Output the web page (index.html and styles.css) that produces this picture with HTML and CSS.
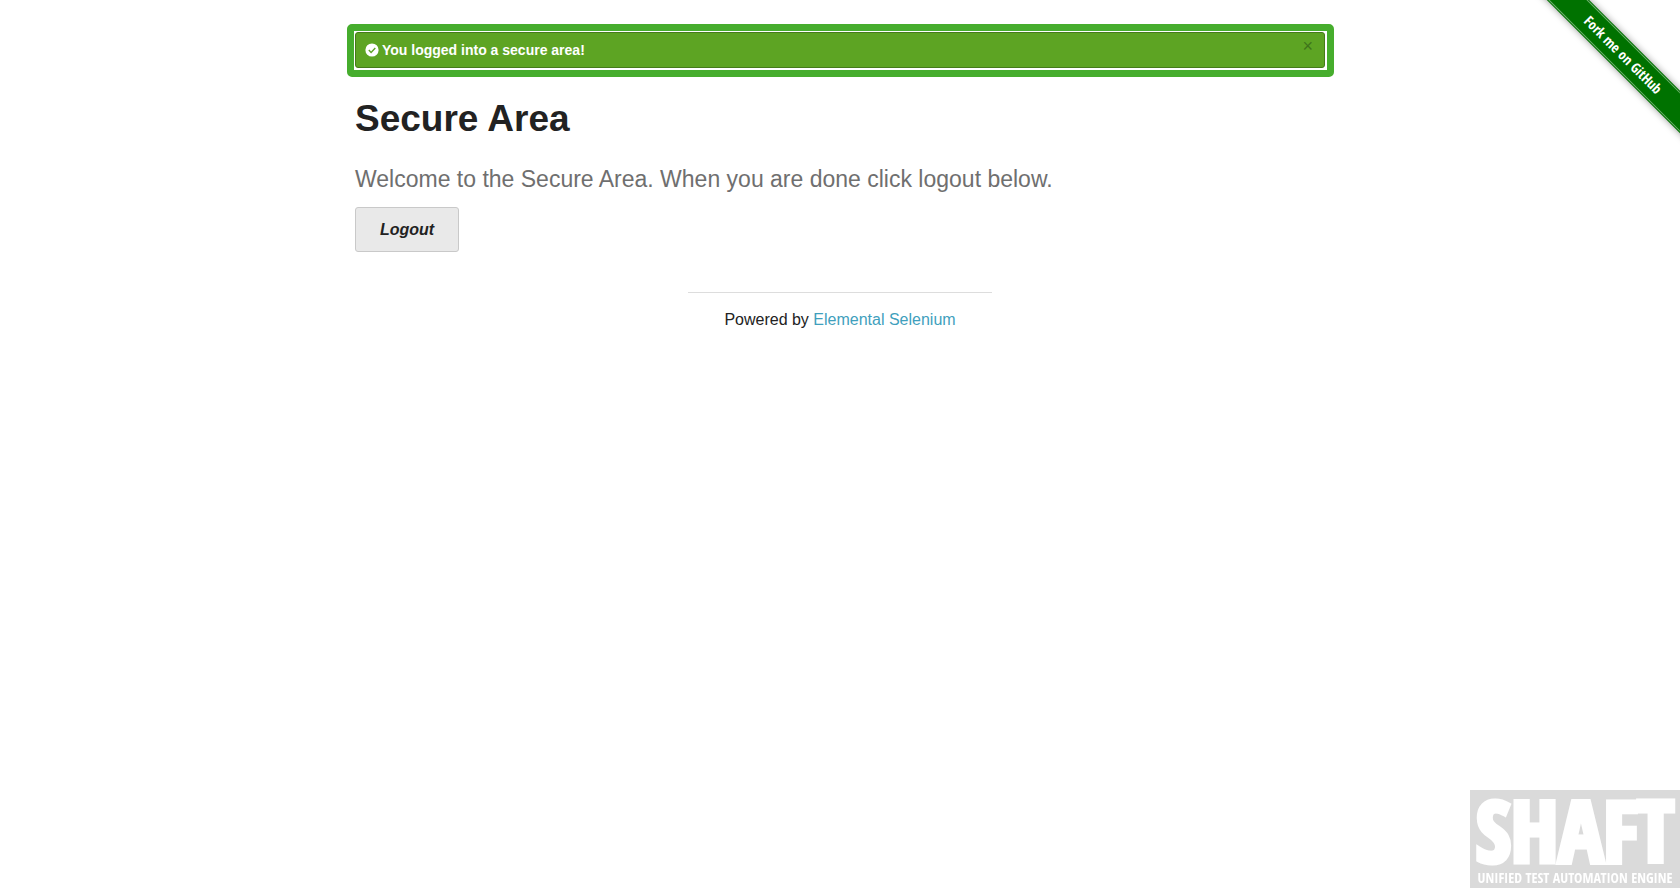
FILE: index.html
```html
<!DOCTYPE html>
<html lang="en">
<head>
<meta charset="utf-8">
<title>The Internet</title>
<link rel="stylesheet" href="styles.css">
</head>
<body>
<main class="content">
  <div class="highlight">
    <div class="alert" role="status">
      <svg class="alert-icon" viewBox="0 0 14 14" aria-hidden="true"><circle cx="7" cy="7" r="6.6" fill="#fff"/><path d="M3.8 7.1 6.1 9.4 10.3 5.1" fill="none" stroke="#5da423" stroke-width="1.4"/></svg>
      <span class="alert-text">You logged into a secure area!</span>
      <a class="close" href="#" aria-label="Close">×</a>
    </div>
  </div>
  <h1 class="title">Secure Area</h1>
  <p class="subheader">Welcome to the Secure Area. When you are done click logout below.</p>
  <button class="logout" type="button">Logout</button>
</main>
<footer class="footer">
  <hr class="rule">
  <p class="powered">Powered by <a class="link" href="#">Elemental Selenium</a></p>
</footer>
<div class="ribbon-corner"><a class="ribbon" href="#">Fork me on GitHub</a></div>
<div class="watermark">
  <span class="watermark-name">SHAFT</span>
  <span class="watermark-tag">UNIFIED TEST AUTOMATION ENGINE</span>
</div>
</body>
</html>
```
FILE: styles.css
```css
* { box-sizing: border-box; }
body {
  margin: 0;
  background: #fff;
  color: #222;
  font-family: "Liberation Sans", Arial, sans-serif;
  font-size: 16px;
  line-height: 24px;
}
.content {
  max-width: 1000px;
  margin: 0 auto;
  padding: 24px 15px 0;
}
.highlight {
  margin: 0 -9px 0 -8px;
  padding: 1px 2px 2px 1px;
  border: 7px solid #46ad2d;
  border-radius: 5px;
}
.alert {
  display: flex;
  align-items: center;
  gap: 3px;
  height: 36px;
  padding: 0 11px 0 9px;
  border: 1px solid #457a1a;
  border-radius: 3px;
  background: #5da423;
  color: #fff;
  font-size: 14px;
  font-weight: bold;
}
.alert-icon { width: 14px; height: 14px; }
.alert-text { flex: 1; }
.close {
  align-self: flex-start;
  color: #3e741b;
  font-size: 18px;
  font-weight: normal;
  line-height: 26px;
  text-decoration: none;
}
.title {
  margin: 16px 0 0;
  font-size: 37px;
  line-height: 52px;
}
.subheader {
  margin: 18px 0 12px;
  color: #6f6f6f;
  font-size: 23px;
  line-height: 32px;
}
.logout {
  display: block;
  padding: 12px 24px;
  border: 1px solid #c9c9c9;
  border-radius: 3px;
  background: #e9e9e9;
  color: #222;
  font: italic bold 16px/19px "Liberation Sans", Arial, sans-serif;
}
.footer { text-align: center; }
.rule {
  width: 304px;
  margin: 40px auto 15px;
  border: 0;
  border-top: 1px solid #ddd;
}
.powered { margin: 0; }
.link { color: #3f9fbd; text-decoration: none; }
.ribbon-corner {
  position: absolute;
  top: 0;
  right: 0;
  width: 150px;
  height: 150px;
  overflow: hidden;
}
.ribbon {
  position: absolute;
  top: 40px;
  right: -54px;
  width: 222px;
  padding: 1px 0;
  transform: rotate(45deg);
  background: #007200;
  box-shadow: 0 0 7px rgba(0, 0, 0, .4);
  color: #fff;
  font: bold 14px/28px "Open Sans Condensed", "Noto Sans", sans-serif;
  text-align: center;
  text-decoration: none;
}
.ribbon::after {
  content: "";
  position: absolute;
  inset: 1px 0;
  border: solid #70b070;
  border-width: 1px 0;
}
.watermark {
  position: fixed;
  right: 0;
  bottom: 0;
  display: flex;
  flex-direction: column;
  align-items: center;
  width: 210px;
  height: 98px;
  background: #dadada;
  color: #fff;
  font-family: "Open Sans Condensed", "Roboto Condensed", "Liberation Sans", sans-serif;
  font-weight: bold;
  white-space: nowrap;
}
.watermark-name {
  font-size: 84px;
  line-height: 80px;
  -webkit-text-stroke: 5px #fff;
}
.watermark-tag { font-size: 14px; line-height: 16px; }
```
